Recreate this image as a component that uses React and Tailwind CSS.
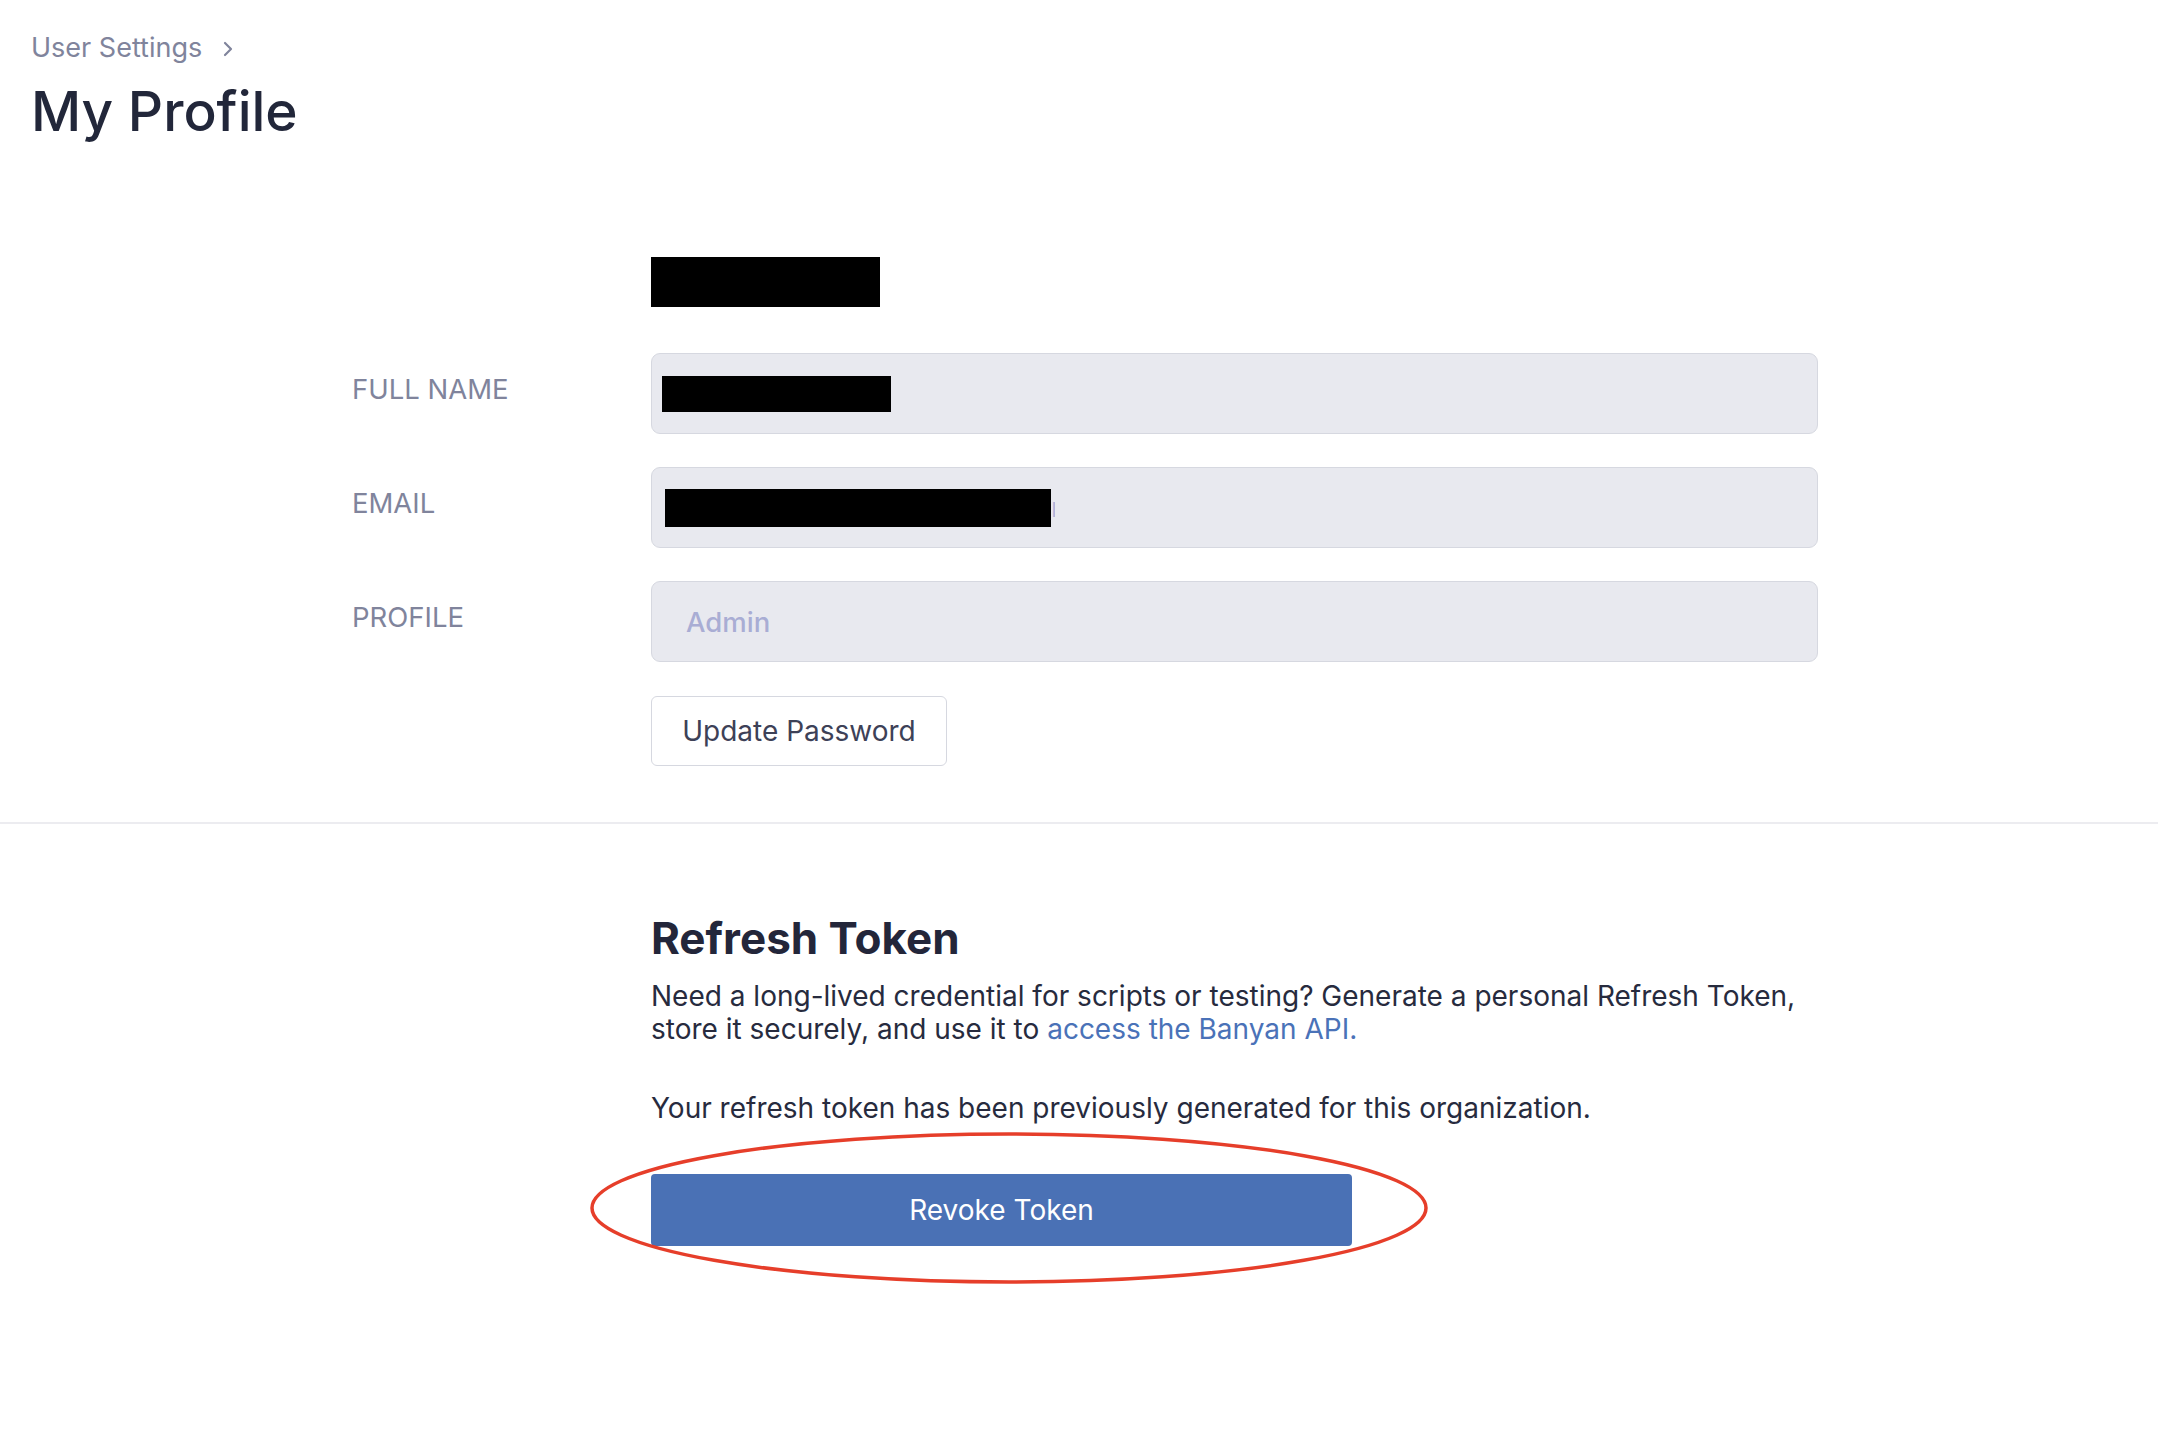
import React from "react";

const Field = ({ label, children }) => (
  <>
    <div className="pt-[20px] text-[27.5px] leading-[32px] text-[#80849c]">{label}</div>
    <div className="flex h-[81px] items-center rounded-[9px] border border-[#d6d8e0] bg-[#e8e9ef] px-[34px]">
      {children}
    </div>
  </>
);

const App = () => {
  return (
    <div className="min-h-screen bg-white font-['Inter',sans-serif]">
      {/* HEADER */}
      <div className="px-[31px] pt-[32px]">
        <div className="flex items-center gap-[20px] text-[27px] leading-[32px] text-[#80849c]">
          <span>User Settings</span>
          <svg width="12" height="16" viewBox="0 0 12 16" fill="none" className="mt-[1px]">
            <path d="M3 2l6 6-6 6" stroke="#80849c" strokeWidth="2.2" strokeLinecap="round" strokeLinejoin="round" />
          </svg>
        </div>
        <h1 className="mt-[12px] text-[55px] font-medium leading-[70px] text-[#22273a]">My Profile</h1>
      </div>

      {/* PROFILE FORM */}
      <div className="ml-[352px] mt-[111px] w-[1466px] pb-[56px]">
        <div className="ml-[299px] h-[50px] w-[229px] bg-black" />

        <div className="mt-[46px] grid grid-cols-[299px_1167px] gap-y-[33px]">
          <Field label="FULL NAME">
            <div className="-ml-[24px] h-[36px] w-[229px] bg-black" />
          </Field>
          <Field label="EMAIL">
            <div className="-ml-[21px] flex items-center">
              <div className="h-[38px] w-[386px] bg-black" />
              <span className="w-[4px] overflow-hidden text-[27px] leading-[32px] text-[#b0b4da]">n</span>
            </div>
          </Field>
          <Field label="PROFILE">
            <span className="text-[27.5px] font-medium leading-[32px] text-[#a9add4]">Admin</span>
          </Field>
        </div>

        <div className="ml-[299px] mt-[34px]">
          <button className="h-[70px] w-[296px] rounded-[6px] border border-[#d6d8e0] bg-white text-[28px] text-[#3d4157]">
            Update Password
          </button>
        </div>
      </div>

      <div className="h-[2px] w-full bg-[#ececf0]" />

      {/* REFRESH TOKEN */}
      <div className="ml-[651px] w-[1180px] pt-[88px]">
        <h2 className="text-[44px] font-bold leading-[53px] text-[#23263a]">Refresh Token</h2>
        <p className="mt-[15px] text-[28px] leading-[33px] text-[#272b3e]">
          Need a long-lived credential for scripts or testing? Generate a personal Refresh Token, store it securely, and
          use it to <a className="text-[#4a72b8]">access the Banyan API.</a>
        </p>
        <p className="mt-[46px] text-[28px] leading-[33px] text-[#272b3e]">
          Your refresh token has been previously generated for this organization.
        </p>

        <div className="relative mt-[49px] w-[701px]">
          <button className="h-[72px] w-[701px] rounded-[4px] bg-[#4a71b5] text-[28px] text-white">Revoke Token</button>
          {/* annotation */}
          <svg
            className="pointer-events-none absolute left-[-62px] top-[-43px]"
            width="840"
            height="154"
            viewBox="0 0 840 154"
            fill="none"
          >
            <ellipse cx="420" cy="77" rx="417" ry="74" stroke="#e63e2a" strokeWidth="3.5" />
          </svg>
        </div>
      </div>
    </div>
  );
};

export default App;
